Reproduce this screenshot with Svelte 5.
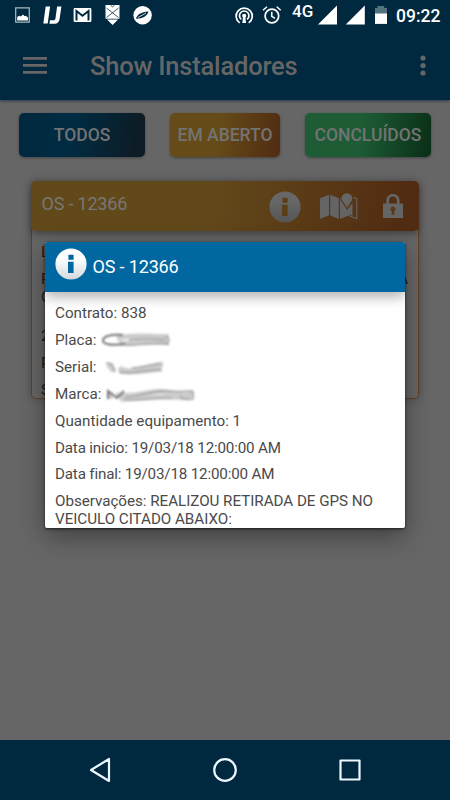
<script>
    const filters = [
        { label: 'TODOS', kind: 'all' },
        { label: 'EM ABERTO', kind: 'open' },
        { label: 'CONCLUÍDOS', kind: 'done' }
    ]

    const order = {
        id: 12366,
        contract: 838,
        quantity: 1,
        start: '19/03/18 12:00:00 AM',
        end: '19/03/18 12:00:00 AM',
        notes: 'REALIZOU RETIRADA DE GPS NO VEICULO CITADO ABAIXO:'
    }
</script>

<svelte:head>
    <title>Show Instaladores</title>
</svelte:head>

{#snippet info(id, light, dark)}
    <svg class="info" viewBox="0 0 32 32">
        <defs>
            <linearGradient {id} x2="0" y2="1">
                <stop offset=".3" stop-color={light} />
                <stop offset="1" stop-color={dark} />
            </linearGradient>
        </defs>
        <path
            fill="url(#{id})"
            fill-rule="evenodd"
            d="M16 .4a15.6 15.6 0 1 0 0 31.2A15.6 15.6 0 0 0 16 .4zM13.400 6.700h5.200v5h-5.200zM13 13.800h5.600v11.300h-5.600z"
        />
    </svg>
{/snippet}

<div class="screen">
    <header>
        <div class="status">
            <svg width="160" height="32" viewBox="0 0 160 32" fill="#fff">
                <path fill="none" stroke="#a9bbc4" stroke-width="1.2" d="M15.7 7.9h13.6v14.3H15.7z" />
                <path d="M17.2 20.4v-3.3l2-1.4 1.6.7 2.2-2 1.5 1.9 1.2-.5 2.3 1.8v2.8z" />
                <path d="M45.7 6.5h4.4l-2.4 17.1h-4.4zM57.1 6.5h4.3l-1.7 11.7c-.6 4-2.2 5.6-6 5.6h-4.3l.5-3.6h3.4c1.5 0 2-.6 2.2-2z" />
                <path d="M74.9 8h15.2q1.3 0 1.3 1.4v11.2q0 1.5-1.3 1.5H74.9q-1.3 0-1.3-1.5V9.4q0-1.4 1.3-1.4z" />
                <path fill="none" stroke="#00293f" stroke-width="2" d="M76.5 20.5V11l6 4.700 6-4.700v9.500" />
                <path d="M105.5 5h14v13.700h-14zM107 19.600h11.100l-5.500 5.300z" />
                <path fill="none" stroke="#00293f" stroke-width=".75" d="M106.5 8l12 9.500M118.500 8l-12 9.500M110.500 5.300l2 1.500 2-1.500" />
                <circle cx="142.6" cy="15.2" r="9.2" />
                <path fill="#00293f" d="M136 18.800c1-4.300 5-6.700 12.500-7.300-1.200 4.300-5.300 7-12.500 7.300z" />
                <path fill="none" stroke="#fff" stroke-width=".8" d="M138 17.500l8-4.500" />
            </svg>
            <svg width="154" height="32" viewBox="233 0 154 32" fill="#fff">
                <g fill="none" stroke="#fff" stroke-width="1.7">
                    <path d="M239.700 22.900a8.100 8.100 0 1 1 9 0" />
                    <path d="M241.300 19.400a4.700 4.700 0 1 1 5.800 0" />
                    <circle cx="271.9" cy="16" r="6.8" />
                    <path d="M271.800 11.800v4.500l3.200 2M263 10.300l4-3.500M280.700 10.300l-4-3.500" stroke-width="1.5" />
                </g>
                <circle cx="244.2" cy="15.8" r="2.1" />
                <path d="M243.100 17h2.200l.8 6h-3.800z" />
                <text x="292" y="16.6" class="network">4G</text>
                <path d="M337 5.600v19h-19zM364.800 5.600v19h-19z" />
                <path fill="#55727f" d="M377.500 6h6.700v2h2.900v6H375V8h2.500z" />
                <path d="M375 13.500h12v10.400h-12z" />
            </svg>
            <span class="clock">09:22</span>
        </div>
        <div class="toolbar">
            <svg class="burger" viewBox="0 0 24 18" fill="#666">
                <path d="M0 0h24v2.700H0zM0 7h24v2.700H0zM0 14h24v2.700H0z" />
            </svg>
            <h1>Show Instaladores</h1>
            <svg class="more" viewBox="0 0 6 22" fill="#666">
                <circle cx="3" cy="3" r="2.6" />
                <circle cx="3" cy="10.5" r="2.6" />
                <circle cx="3" cy="18" r="2.6" />
            </svg>
        </div>
    </header>

    <main>
        <nav class="filters">
            {#each filters as filter}
                <button class={filter.kind}>{filter.label}</button>
            {/each}
        </nav>

        <article class="card">
            <div class="card-head">
                <span>OS - {order.id}</span>
                <div class="actions">
                    {@render info('info-dim', '#676767', '#555')}
                    <svg class="map" viewBox="0 0 38 28">
                        <path fill="#646464" d="M0 5.300l9-3.600v20.600L0 26zM10.200 1.700l8.600 3.500V26l-8.600-3.600zM20 4.700l3-1.200 5 10.800V22.800L20 26z" />
                        <path fill="none" stroke="#646464" stroke-width="1.1" d="M32.500 4.200l4.300 1.500v20l-8.300-3.300V15" />
                        <path fill="#646464" d="M28.500 15.500l4-6v13l-4-1.200z" />
                        <path fill="#666" stroke="#58370f" stroke-width="1.1" d="M26.900-.4a6 6 0 0 1 6 6c0 3-3.600 5.500-5.700 10.500-2-5-6.300-7.500-6.300-10.500a6 6 0 0 1 6-6z" />
                    </svg>
                    <svg class="lock" viewBox="0 0 20 24">
                        <path fill="none" stroke="#666" stroke-width="2.7" d="M4.700 11V6.500a5.200 5.200 0 0 1 10.500 0V11" />
                        <path fill="#656565" d="M0 9.500h20V24H0z" />
                        <path fill="#573a16" d="M10 12.500a2.600 2.600 0 0 1 1.100 4.900l.6 3.100H8.300l.6-3.100a2.600 2.600 0 0 1 1.100-4.900z" />
                    </svg>
                </div>
            </div>
            <div class="card-body">
                <p>L</p>
                <p class="wide"><span>P</span><span>A</span></p>
                <p>C</p>
                <p class="gap">2</p>
                <p>P</p>
                <p>S</p>
            </div>
        </article>
    </main>

    <footer>
        <svg viewBox="0 0 450 60" fill="none" stroke="#edf7ff" stroke-width="2.2" stroke-linejoin="round">
            <path d="M109 19v22L91 30z" />
            <circle cx="225" cy="30" r="10.8" />
            <path d="M340.500 20.500h19v19h-19z" />
        </svg>
    </footer>

    <section class="dialog">
        <div class="dialog-head">
            {@render info('info-bright', '#fff', '#d4d9de')}
            <h2>OS - {order.id}</h2>
        </div>
        <div class="dialog-body">
            <p>Contrato: {order.contract}</p>
            <p>
                Placa:
                <svg class="smudge" width="72" height="18" viewBox="0 0 72 18">
                    <path class="haze" d="M16 6c16-3 32-2 52-1M18 11c16 1 32-3 50 0" />
                    <path class="ink" d="M22 3C8 2 2 5 2 8.500S9 14 24 12" />
                    <path class="streak" d="M28 8c14-2 24-1 37 0M24 13c14 1 28-3 44-1M64 4l4 3-2 5" />
                </svg>
            </p>
            <p>
                Serial:
                <svg class="smudge serial" width="64" height="18" viewBox="0 0 64 18">
                    <path class="haze" d="M4 5l6 7M15 9c10 7 26-1 44-4M16 12c14 3 26-1 42-2" />
                    <path class="streak" d="M2 4l6 1 3 8M15 13c14 3 26-3 42-2M28 9c10 0 14-3 28-4" />
                </svg>
            </p>
            <p>
                Marca:
                <svg class="smudge" width="92" height="18" viewBox="0 0 92 18">
                    <path class="haze" d="M4 6v7M10 9c24 3 34-6 50-3s20 4 27 2M14 13c20 0 40-4 70-1" />
                    <path class="ink" d="M2 13V5l9 7 7-7" />
                    <path class="streak" d="M20 11c16 0 24-7 40-6s18 0 27 0M18 14c16 1 32-3 48-2M74 11l4 2h9V5" />
                </svg>
            </p>
            <p>Quantidade equipamento: {order.quantity}</p>
            <p class="date">Data inicio: {order.start}</p>
            <p class="date">Data final: {order.end}</p>
            <p class="notes">Observações: {order.notes}</p>
        </div>
    </section>
</div>

<style>
    :global(body) {
        margin: 0;
    }

    .screen {
        position: relative;
        display: flex;
        flex-direction: column;
        width: 450px;
        height: 800px;
        overflow: hidden;
        background: #666;
        font-family: Roboto, sans-serif;
    }

    svg {
        display: block;
        flex: none;
    }

    h1, h2, p {
        margin: 0;
    }

    header {
        height: 100px;
        background: #00293f;
        box-shadow: 0 1px 3px #26394a;
    }

    .status {
        display: flex;
        height: 32px;
        color: #fff;
    }

    .status svg + svg {
        margin-left: 73px;
    }

    .network {
        font-size: 17px;
        font-weight: 500;
    }

    .clock {
        margin-left: 9px;
        font-size: 17.5px;
        font-weight: 500;
        line-height: 32px;
    }

    .toolbar {
        display: flex;
        align-items: center;
        height: 68px;
        padding: 0 24.5px 0 23px;
        color: #666;
    }

    .burger {
        width: 24px;
        height: 18px;
    }

    .more {
        width: 6px;
        height: 22px;
    }

    h1 {
        flex: 1;
        margin-left: 43px;
        font-size: 25.5px;
        font-weight: 500;
        letter-spacing: -.2px;
        line-height: 68px;
    }

    main {
        flex: 1;
    }

    .filters {
        display: flex;
        justify-content: space-between;
        padding: 12.5px 19px 0 19px;
    }

    button {
        width: 126px;
        height: 44px;
        padding: 0;
        border: 0;
        border-radius: 5px;
        color: #737373;
        font: 500 17.5px/44px Roboto, sans-serif;
        box-shadow: 0 1px 3px rgba(0, 0, 0, .35);
    }

    .all {
        background: linear-gradient(100deg, #00293f 15%, #002c43 40%, #0d1b24 95%);
    }

    .open {
        width: 110.5px;
        background: linear-gradient(100deg, #644b18 45%, #512b12 100%);
    }

    .done {
        background: linear-gradient(100deg, #1d5c35 45%, #0b3219 95%);
    }

    .card {
        box-sizing: border-box;
        width: 388px;
        height: 218px;
        margin: 24.5px 0 0 31px;
        border: 1px solid #65401f;
        border-top: 0;
        border-radius: 5px;
        box-shadow: 0 0 10px rgba(0, 0, 0, .25);
    }

    .card-head {
        display: flex;
        justify-content: space-between;
        height: 50px;
        margin: 0 -1px;
        padding: 0 16px 0 10.5px;
        border-radius: 5px;
        background: linear-gradient(100deg, #62491a 45%, #512b12 97%);
        box-shadow: 0 3px 7px rgba(0, 0, 0, .35);
        color: #777;
        font-size: 18px;
        letter-spacing: -.2px;
        line-height: 46px;
    }

    .actions {
        display: flex;
        align-items: center;
        padding-top: 2px;
    }

    .info {
        width: 32px;
        height: 32px;
    }

    .map {
        width: 38px;
        height: 28px;
        margin: 0 25px 0 19px;
    }

    .lock {
        width: 20px;
        height: 24px;
        margin-bottom: 2px;
    }

    .card-body {
        padding: 12px 10px 0 9px;
        color: #1c1c1c;
        font-size: 15.2px;
        line-height: 18px;
    }

    .card-body p {
        margin-bottom: 9px;
    }

    .card-body .wide {
        display: flex;
        justify-content: space-between;
        margin-bottom: 0;
    }

    .card-body .gap {
        margin-top: 21px;
    }

    footer {
        height: 60px;
        background: #00293f;
    }

    .dialog {
        position: absolute;
        top: 241.5px;
        left: 45px;
        width: 360px;
        height: 286.5px;
        border-radius: 2px;
        overflow: hidden;
        background: #fff;
        box-shadow: 0 8px 26px rgba(0, 0, 0, .38), 0 1px 3px rgba(0, 0, 0, .65);
    }

    .dialog-head {
        position: relative;
        display: flex;
        height: 50.5px;
        padding: 6px 10px 0;
        box-sizing: border-box;
        background: #0067a1;
        box-shadow: 0 5px 12px rgba(0, 0, 0, .3);
        color: #fff;
    }

    h2 {
        margin-left: 5.5px;
        font-size: 18px;
        font-weight: 400;
        letter-spacing: -.15px;
        line-height: 38px;
    }

    .dialog-body {
        padding: 13px 10px;
        color: #4a4a4a;
        font-size: 15.2px;
        line-height: 17.8px;
    }

    .dialog-body p {
        display: flex;
        margin-bottom: 9px;
    }

    .dialog-body .date {
        letter-spacing: -.18px;
    }

    .dialog-body .notes {
        letter-spacing: -.03px;
        line-height: 17.5px;
    }

    .smudge {
        margin-left: 5px;
        fill: none;
        filter: blur(1.2px);
    }

    .serial {
        margin-left: 7px;
    }

    .haze {
        stroke: #ccc;
        stroke-width: 5;
    }

    .ink {
        stroke: #777;
        stroke-width: 2;
    }

    .streak {
        stroke: #a3a3a3;
        stroke-width: 1.5;
    }
</style>
